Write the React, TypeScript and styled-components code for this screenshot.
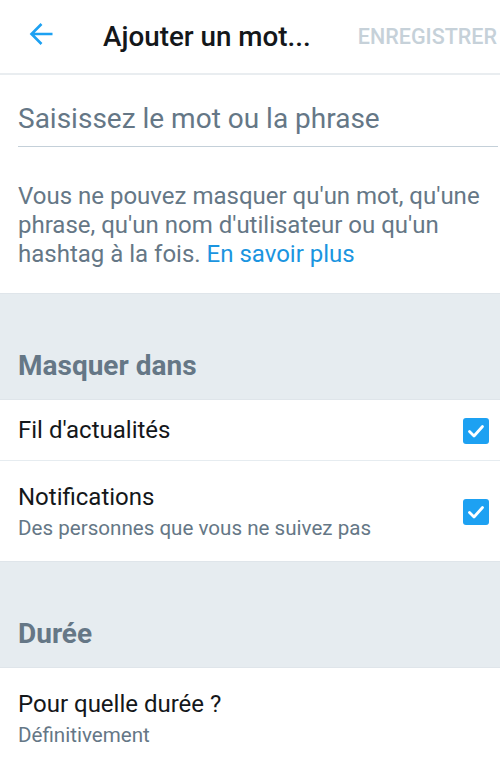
import React from "react";
import styled, { createGlobalStyle } from "styled-components";

const GlobalStyle = createGlobalStyle`
  html, body {
    margin: 0;
    padding: 0;
    background: #ffffff;
  }
  body {
    font-family: Roboto, "Noto Sans", Arial, sans-serif;
    -webkit-font-smoothing: antialiased;
  }
  * { box-sizing: border-box; }
`;

const Screen = styled.div`
  width: 500px;
  min-height: 763px;
  background: #ffffff;
  overflow: hidden;
`;

const Header = styled.header`
  display: flex;
  align-items: center;
  height: 75px;
  padding: 0 3px 0 28px;
  border-bottom: 2px solid #e9edf0;
`;

const BackButton = styled.button`
  display: flex;
  align-items: center;
  justify-content: center;
  width: 26px;
  height: 26px;
  padding: 0;
  margin-bottom: 6px;
  border: none;
  background: none;
  color: #1da1f2;
`;

const Title = styled.h1`
  flex: 1;
  margin: 0 0 0 49px;
  font-size: 27.8px;
  font-weight: 500;
  line-height: 33px;
  color: #14171a;
  white-space: nowrap;
`;

const SaveButton = styled.span`
  font-size: 21.5px;
  font-weight: 500;
  line-height: 26px;
  color: #c6d1d9;
`;

const InputWrap = styled.div`
  margin: 0 2px 0 18px;
  padding: 27px 0 11px;
  border-bottom: 1px solid #c4d0d9;
`;

const Placeholder = styled.div`
  font-size: 28px;
  line-height: 33px;
  color: #657786;
`;

const Help = styled.p`
  margin: 0;
  padding: 35px 10px 24px 18px;
  font-size: 24px;
  line-height: 29px;
  color: #657786;
`;

const Link = styled.a`
  color: #1b95e0;
  text-decoration: none;
`;

const Section = styled.div`
  background: #e6ecf0;
  border-top: 1px solid #dfe5ea;
  border-bottom: 1px solid #dfe5ea;
  padding: 55px 18px 17px;
`;

const SectionTitle = styled.h2`
  margin: 0;
  font-size: 28px;
  font-weight: 700;
  line-height: 33px;
  color: #657786;
`;

const Row = styled.div<{ $top: number; $bottom: number; $divider?: boolean }>`
  display: flex;
  align-items: center;
  padding: ${(p) => p.$top}px 11px ${(p) => p.$bottom}px 18px;
  border-bottom: ${(p) => (p.$divider ? "1px solid #e6ecf0" : "none")};
`;

const RowText = styled.div`
  flex: 1;
  display: flex;
  flex-direction: column;
`;

const RowLabel = styled.div`
  font-size: 24px;
  line-height: 29px;
  color: #14171a;
`;

const RowSub = styled.div`
  margin-top: 4px;
  font-size: 20.6px;
  line-height: 24px;
  color: #657786;
`;

const Checkbox = styled.span`
  display: flex;
  align-items: center;
  justify-content: center;
  width: 26px;
  height: 26px;
  border-radius: 3px;
  background: #1da1f2;
`;

const Check = () => (
  <svg width="20" height="20" viewBox="0 0 20 20" fill="none">
    <path
      d="M3.5 10.5 L8 15 L16.5 5.5"
      stroke="#ffffff"
      strokeWidth="2.8"
      strokeLinecap="round"
      strokeLinejoin="round"
    />
  </svg>
);

const BackArrow = () => (
  <svg width="26" height="26" viewBox="0 0 26 26" fill="none">
    <path
      d="M24.5 13 H3.5 M13.5 3 L3.5 13 L13.5 23"
      stroke="currentColor"
      strokeWidth="2.6"
    />
  </svg>
);

export default function App() {
  return (
    <>
      <GlobalStyle />
      <Screen>
        <Header>
          <BackButton aria-label="Retour">
            <BackArrow />
          </BackButton>
          <Title>Ajouter un mot...</Title>
          <SaveButton>ENREGISTRER</SaveButton>
        </Header>

        <InputWrap>
          <Placeholder>Saisissez le mot ou la phrase</Placeholder>
        </InputWrap>

        <Help>
          Vous ne pouvez masquer qu'un mot, qu'une phrase, qu'un nom
          d'utilisateur ou qu'un hashtag à la fois.{" "}
          <Link href="#">En savoir plus</Link>
        </Help>

        <Section>
          <SectionTitle>Masquer dans</SectionTitle>
        </Section>

        <Row $top={16} $bottom={15} $divider>
          <RowText>
            <RowLabel>Fil d'actualités</RowLabel>
          </RowText>
          <Checkbox>
            <Check />
          </Checkbox>
        </Row>

        <Row $top={22} $bottom={21}>
          <RowText>
            <RowLabel>Notifications</RowLabel>
            <RowSub>Des personnes que vous ne suivez pas</RowSub>
          </RowText>
          <Checkbox>
            <Check />
          </Checkbox>
        </Row>

        <Section>
          <SectionTitle>Durée</SectionTitle>
        </Section>

        <Row $top={22} $bottom={20}>
          <RowText>
            <RowLabel>Pour quelle durée ?</RowLabel>
            <RowSub>Définitivement</RowSub>
          </RowText>
        </Row>
      </Screen>
    </>
  );
}
